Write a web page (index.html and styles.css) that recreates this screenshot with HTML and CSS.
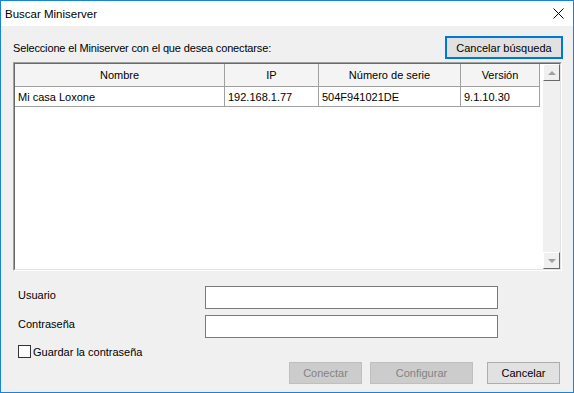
FILE: index.html
```html
<!DOCTYPE html>
<html lang="es">
<head>
  <meta charset="UTF-8" />
  <title>Buscar Miniserver</title>
  <link rel="stylesheet" href="styles.css">
</head>
<body>
  <div class="window">
    <div class="titlebar">
      <span>Buscar Miniserver</span>
      <svg class="close" width="11" height="11" viewBox="0 0 11 11">
        <path d="M0.5 0.5 L10.5 10.5 M10.5 0.5 L0.5 10.5" stroke="#000" stroke-width="1" fill="none" />
      </svg>
    </div>

    <div class="content">
      <!-- Top row -->
      <div class="top-row">
        <span class="intro">Seleccione el Miniserver con el que desea conectarse:</span>
        <button class="btn btn-default">Cancelar búsqueda</button>
      </div>

      <!-- Miniserver list -->
      <div class="grid-box">
        <div class="grid-inner">
          <div class="grid-area">
            <div class="grid-row grid-head">
              <div class="cell col-name">Nombre</div>
              <div class="cell col-ip">IP</div>
              <div class="cell col-serial">Número de serie</div>
              <div class="cell col-version">Versión</div>
            </div>
            <div class="grid-row">
              <div class="cell col-name">Mi casa Loxone</div>
              <div class="cell col-ip">192.168.1.77</div>
              <div class="cell col-serial">504F941021DE</div>
              <div class="cell col-version">9.1.10.30</div>
            </div>
          </div>
          <div class="scrollbar">
            <div class="scroll-btn"><span class="arrow-up"></span></div>
            <div class="scroll-btn"><span class="arrow-down"></span></div>
          </div>
        </div>
      </div>

      <!-- Login -->
      <div class="field">
        <label>Usuario</label>
        <input type="text" />
      </div>
      <div class="field field-second">
        <label>Contraseña</label>
        <input type="password" />
      </div>
      <div class="check-row">
        <span class="checkbox"></span>
        <span>Guardar la contraseña</span>
      </div>

      <div class="actions">
        <button class="btn btn-disabled btn-connect">Conectar</button>
        <button class="btn btn-disabled btn-config">Configurar</button>
        <button class="btn btn-cancel">Cancelar</button>
      </div>
    </div>
  </div>
</body>
</html>
```

FILE: styles.css
```css
body {
  margin: 0;
  font-family: "Liberation Sans", Arial, sans-serif;
  font-size: 11px;
  color: #000;
  background: #fff;
}

.window {
  width: 574px;
  height: 393px;
  box-sizing: border-box;
  border: 1px solid #1883d7;
  background: #f0f0f0;
  display: flex;
  flex-direction: column;
}

.titlebar {
  height: 25px;
  background: #fff;
  display: flex;
  align-items: center;
  justify-content: space-between;
  padding: 0 9px 0 4px;
  font-size: 11.5px;
}

.content {
  flex: 1;
  display: flex;
  flex-direction: column;
  padding: 0 10px 0 12px;
}

.top-row {
  display: flex;
  justify-content: space-between;
  align-items: center;
  margin-top: 10px;
}

.intro {
  letter-spacing: -0.15px;
}

.btn {
  font-family: inherit;
  font-size: 11px;
  height: 22px;
  padding: 0;
  box-sizing: border-box;
  background: #e1e1e1;
  border: 1px solid #adadad;
  color: #000;
}

.btn-default {
  width: 118px;
  height: 23px;
  border: 2px solid #0078d7;
}

.grid-box {
  margin: 3px 1px 0 0;
  height: 209px;
  box-sizing: border-box;
  border: 1px solid;
  border-color: #a0a0a0 #fff #fff #a0a0a0;
}

.grid-inner {
  height: 100%;
  box-sizing: border-box;
  border: 1px solid;
  border-color: #696969 #e3e3e3 #e3e3e3 #696969;
  display: flex;
}

.grid-area {
  flex: 1;
  background: #fff;
}

.grid-row {
  display: flex;
  height: 20px;
  border-bottom: 1px solid #a0a0a0;
  width: 525px;
  box-sizing: border-box;
}

.grid-head {
  height: 23px;
  background: #f4f4f4;
}

.cell {
  box-sizing: border-box;
  border-right: 1px solid #a0a0a0;
  padding-left: 3px;
  display: flex;
  align-items: center;
  white-space: nowrap;
}

.grid-head .cell {
  justify-content: center;
  padding-left: 0;
}

.col-name { width: 210px; }
.col-ip { width: 94px; }
.col-serial { width: 142px; }
.col-version { width: 79px; }

.scrollbar {
  width: 17px;
  background: #f0f0f0;
  display: flex;
  flex-direction: column;
  justify-content: space-between;
}

.scroll-btn {
  width: 17px;
  height: 17px;
  box-sizing: border-box;
  border: 1px solid;
  border-color: #fff #696969 #696969 #fff;
  background: #f0f0f0;
  display: flex;
  align-items: center;
  justify-content: center;
}

.arrow-up,
.arrow-down {
  width: 0;
  height: 0;
  border-left: 4px solid transparent;
  border-right: 4px solid transparent;
}

.arrow-up { border-bottom: 4px solid #a0a0a0; }
.arrow-down { border-top: 4px solid #a0a0a0; }

.field {
  display: flex;
  align-items: flex-start;
  padding-left: 5px;
  margin-top: 15px;
}

.field-second {
  margin-top: 6px;
}

.field label {
  width: 187px;
  padding-top: 3px;
}

.field input {
  width: 293px;
  height: 23px;
  box-sizing: border-box;
  border: 1px solid #7a7a7a;
  background: #fff;
  margin: 0;
}

.check-row {
  display: flex;
  align-items: center;
  gap: 2px;
  padding-left: 5px;
  margin-top: 7px;
  height: 13px;
}

.checkbox {
  width: 13px;
  height: 13px;
  box-sizing: border-box;
  border: 1px solid #333;
  background: #fff;
}

.actions {
  display: flex;
  justify-content: flex-end;
  margin-top: 4px;
  padding-right: 3px;
}

.btn-disabled {
  background: #cccccc;
  border-color: #bfbfbf;
  color: #838383;
}

.btn-connect { width: 73px; }
.btn-config { width: 103px; margin-left: 8px; }
.btn-cancel { width: 73px; margin-left: 14px; }
```
